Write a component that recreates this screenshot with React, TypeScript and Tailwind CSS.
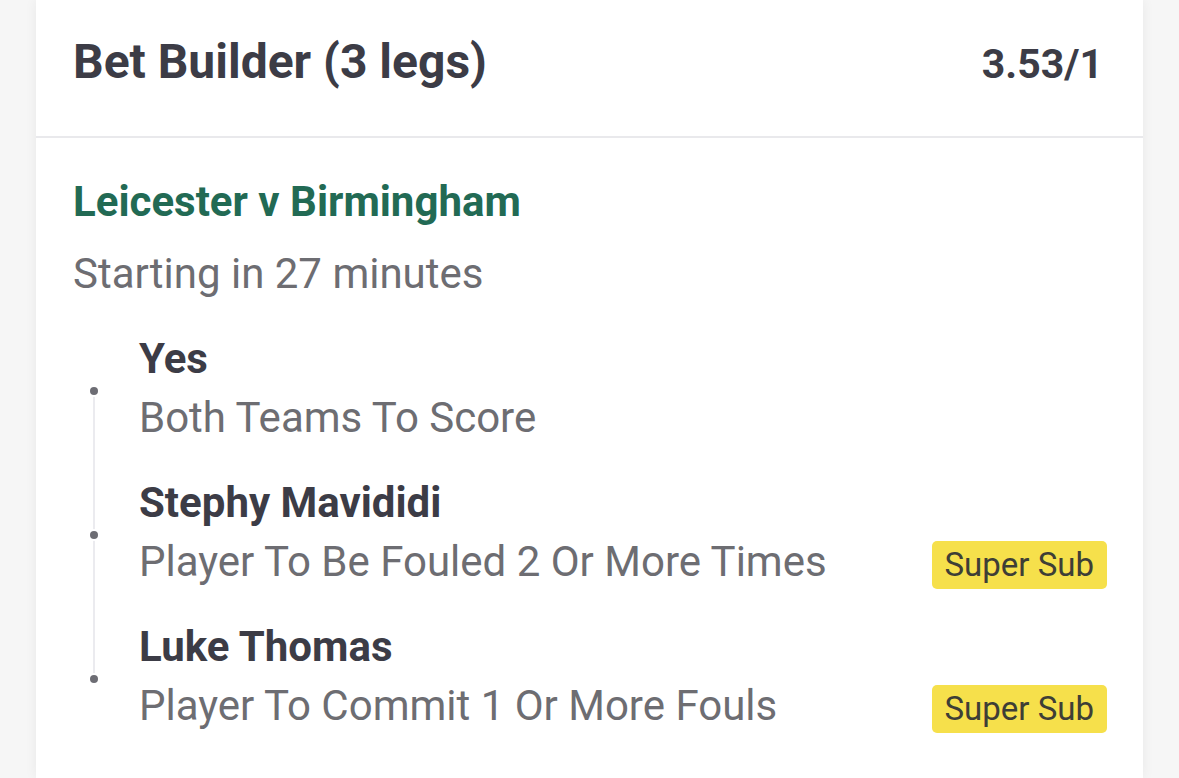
import React from "react";

const legs = [
  { title: "Yes", sub: "Both Teams To Score", badge: false },
  { title: "Stephy Mavididi", sub: "Player To Be Fouled 2 Or More Times", badge: true },
  { title: "Luke Thomas", sub: "Player To Commit 1 Or More Fouls", badge: true },
];

export default function App() {
  return (
    <div
      className="w-[1179px] h-[778px] bg-[#f6f6f6] px-[36px] overflow-hidden"
      style={{ fontFamily: "Roboto, 'Noto Sans', sans-serif" }}
    >
      <div className="h-full bg-white shadow-[0_0_12px_rgba(0,0,0,0.06)] flex flex-col">
        <div className="h-[138px] shrink-0 flex items-baseline justify-between pt-[38px] pl-[37px] pr-[40px] border-b-2 border-[#e9e9ec]">
          <span className="text-[48px] font-bold text-[#3c3c46] leading-none">Bet Builder (3 legs)</span>
          <span className="text-[41px] font-bold text-[#3c3c46] leading-none">3.53/1</span>
        </div>
        <div className="pl-[37px] pr-[36px] pt-[39px]">
          <div className="text-[42px] font-bold text-[#226a54] leading-[50px]">Leicester v Birmingham</div>
          <div className="text-[42px] text-[#6d6d72] leading-[50px] mt-[22px]">Starting in 27 minutes</div>
          <div className="relative mt-[35px] pl-[66px]">
            <div className="absolute left-[20px] top-[57px] h-[288px] w-[2px] bg-[#ebebef]" />
            {legs.map((leg, i) => (
              <div key={i} className="relative h-[144px] flex flex-col">
                <div className="absolute left-[-51px] top-[51px] w-[12px] h-[12px] rounded-full bg-white flex items-center justify-center">
                  <div className="w-[8px] h-[8px] rounded-full bg-[#6d6d74]" />
                </div>
                <div className="text-[42px] font-bold text-[#3c3c46] leading-[50px]">{leg.title}</div>
                <div className="flex items-start justify-between mt-[9px]">
                  <span className="text-[42px] text-[#6d6d72] leading-[50px]">{leg.sub}</span>
                  {leg.badge && (
                    <span className="mt-[4px] bg-[#f6e04b] text-[#3e3e36] text-[33px] leading-[48px] px-[13px] rounded-[5px]">
                      Super Sub
                    </span>
                  )}
                </div>
              </div>
            ))}
          </div>
        </div>
      </div>
    </div>
  );
}
